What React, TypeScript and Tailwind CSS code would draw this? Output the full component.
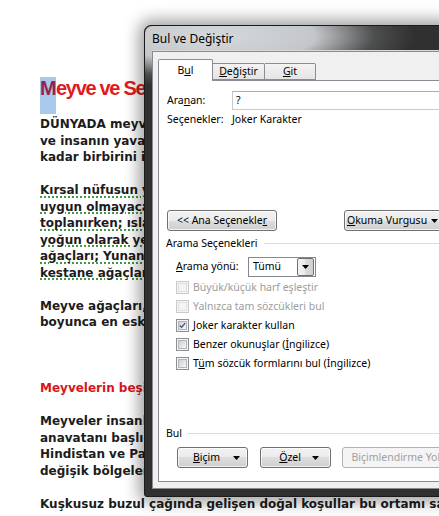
import React from "react";

const p1 = [
  "DÜNYADA meyve ağaçlarının ortaya çıkışı ile",
  "ve insanın yavaş yavaş yerleşik yaşama geçişi",
  "kadar birbirini izleyen iki olgudur.",
];

const p2 = [
  "Kırsal nüfusun yaşadığı bölgelerde tarıma",
  "uygun olmayacak kadar dik yamaçlarda meyve",
  "toplanırken; ıslah edilmiş meyve ağaçları",
  "yoğun olarak yetiştirilmiştir. Ceviz ağaçları,",
  "ağaçları; Yunanistan'da zeytin ağaçları,",
  "kestane ağaçları bunlara örnektir.",
];

const p3 = [
  "Meyve ağaçları, insanlık tarihi",
  "boyunca en eski kültür bitkileri arasındadır.",
];

const p4 = [
  "Meyveler insanlığın beşiği olan bölgelerde,",
  "anavatanı başlıca Orta Asya, Kafkasya,",
  "Hindistan ve Pakistan'dır. Meyveler daha sonra",
  "değişik bölgelere yayılmıştır.",
];

function Para({ lines, wavy = false, className = "" }: { lines: string[]; wavy?: boolean; className?: string }) {
  return (
    <div className={className}>
      {lines.map((l) => (
        <div key={l} className="h-[16.5px] whitespace-nowrap">
          <span className={wavy ? "underline decoration-dotted decoration-[#3f9b3f] decoration-[1.5px] underline-offset-[2px]" : ""}>{l}</span>
        </div>
      ))}
    </div>
  );
}

function Arrow({ color = "#000" }: { color?: string }) {
  return (
    <svg width="7" height="4" viewBox="0 0 7 4" className="shrink-0">
      <path d="M0 0h7L3.5 4z" fill={color} />
    </svg>
  );
}

function Btn({ children, className = "" }: { children: React.ReactNode; className?: string }) {
  return (
    <div
      className={`h-[21px] flex items-center rounded-[3px] border border-[#707070] bg-[linear-gradient(#f2f2f2_0%,#ebebeb_50%,#dddddd_50%,#cfcfcf_100%)] shadow-[inset_0_0_0_1px_rgba(255,255,255,0.7)] text-black ${className}`}
    >
      {children}
    </div>
  );
}

function Check({ checked = false, disabled = false }: { checked?: boolean; disabled?: boolean }) {
  return (
    <div
      className={`w-[13px] h-[13px] shrink-0 border flex items-center justify-center ${
        disabled ? "border-[#c9cacb] bg-[#f4f4f4]" : "border-[#8e8f8f] bg-[#f4f4f4]"
      }`}
    >
      <div
        className={`w-[9px] h-[9px] flex items-center justify-center ${
          disabled ? "bg-[#f4f4f4] border border-[#e0e0e0]" : "bg-[linear-gradient(135deg,#cbcfd5,#f7f7f7)] border border-[#b3b6ba]"
        }`}
      >
        {checked && (
          <svg width="9" height="9" viewBox="0 0 9 9" className="-mt-[1px]">
            <path d="M1.2 4.6 3.4 6.9 7.9 1.4" stroke="#3c4f86" strokeWidth="1.7" fill="none" />
          </svg>
        )}
      </div>
    </div>
  );
}

function CheckRow({ children, checked, disabled }: { children: React.ReactNode; checked?: boolean; disabled?: boolean }) {
  return (
    <div className={`h-[19px] flex items-center gap-[4px] pl-[17px] ${disabled ? "text-[#9d9d9d]" : "text-black"}`}>
      <Check checked={checked} disabled={disabled} />
      <span>{children}</span>
    </div>
  );
}

function Dialog() {
  return (
    <div className="absolute left-[144px] top-[25px] w-[310px] h-[472px] flex flex-col rounded-t-[7px] rounded-b-[3px] border border-[#1b1b1b] bg-[#303030] shadow-[0_0_16px_5px_rgba(0,0,0,0.38)] font-['Segoe_UI','Noto_Sans',sans-serif] text-[10.5px]">
      <div className="absolute inset-0 rounded-t-[7px] bg-[radial-gradient(ellipse_200px_52px_at_70px_10px,rgba(214,217,220,1)_0%,rgba(204,207,210,0.95)_50%,rgba(120,122,124,0.4)_80%,transparent_100%)]" />
      <div className="relative h-[25px] flex items-center pl-[7px] text-[12px] text-black">Bul ve Değiştir</div>
      <div className="relative flex-1 ml-[7px] mb-[7px] flex flex-col border border-[#8a8c8e] bg-[#f0f0f0] pt-[7px] pl-[5px] pb-[6px] shadow-[0_-1px_0_#d9d9d9]">
        {/* tabs */}
        <div className="flex items-end h-[21px]">
          <div className="relative z-10 -mb-px w-[55px] h-[22px] flex items-center justify-center border border-b-0 border-[#898c95] rounded-t-[2px] bg-white text-black">
            <span>
              B<span className="underline">u</span>l
            </span>
          </div>
          <div className="w-[52px] h-[17px] flex items-center justify-center border border-l-0 border-[#898c95] rounded-tr-[2px] bg-[linear-gradient(#f3f3f3,#e4e4e4)] text-black">
            <span>
              <span className="underline">D</span>eğiştir
            </span>
          </div>
          <div className="w-[51px] h-[17px] flex items-center justify-center border border-l-0 border-[#898c95] rounded-tr-[2px] bg-[linear-gradient(#f3f3f3,#e4e4e4)] text-black">
            <span>
              <span className="underline">G</span>it
            </span>
          </div>
        </div>

        {/* panel */}
        <div className="flex-1 flex flex-col border border-[#898c95] bg-white text-black">
          <div className="mt-[10px] h-[19px] flex items-center pl-[8px]">
            <span className="w-[65px] shrink-0">
              Ara<span className="underline">n</span>an:
            </span>
            <div className="flex-1 h-[19px] flex items-center pl-[3px] border border-[#c5c9d0] border-t-[#abadb3] bg-white">?</div>
          </div>
          <div className="mt-[2px] h-[16px] flex items-center pl-[8px]">
            <span className="w-[65px] shrink-0">Seçenekler:</span>
            <span>Joker Karakter</span>
          </div>

          <div className="mt-[82px] flex items-center pl-[8px]">
            <Btn className="w-[110px] justify-center">
              <span>
                {"<< Ana Seçenekle"}
                <span className="underline">r</span>
              </span>
            </Btn>
            <Btn className="ml-[67px] w-[100px] pl-[2px] pr-[5px] justify-between">
              <span>
                <span className="underline">O</span>kuma Vurgusu
              </span>
              <Arrow />
            </Btn>
          </div>

          <div className="mt-[5px] h-[15px] flex items-center pl-[7px]">
            <span>Arama Seçenekleri</span>
            <div className="flex-1 ml-[6px] h-px bg-[#dcdcdc]" />
          </div>

          <div className="mt-[6px] h-[20px] flex items-center pl-[17px]">
            <span className="w-[72px] shrink-0">
              <span className="underline">A</span>rama yönü:
            </span>
            <div className="w-[68px] h-[20px] flex items-center border border-[#828790] bg-white">
              <span className="flex-1 pl-[4px]">Tümü</span>
              <div className="w-[17px] h-[18px] mr-px flex items-center justify-center rounded-[2px] border border-[#707070] bg-[linear-gradient(90deg,#f2f2f2_0%,#ebebeb_50%,#dddddd_50%,#cfcfcf_100%)]">
                <Arrow />
              </div>
            </div>
          </div>

          <div className="mt-[1px] flex flex-col">
            <CheckRow disabled>Büyük/küçük harf eşleştir</CheckRow>
            <CheckRow disabled>Yalnızca tam sözcükleri bul</CheckRow>
            <CheckRow checked>
              <span className="underline">J</span>oker karakter kullan
            </CheckRow>
            <CheckRow>
              Benzer okunuşlar (<span className="underline">İ</span>ngilizce)
            </CheckRow>
            <CheckRow>
              T<span className="underline">ü</span>m sözcük formlarını bul (İngilizce)
            </CheckRow>
          </div>

          <div className="mt-[53px] h-[15px] flex items-center pl-[7px]">
            <span>Bul</span>
            <div className="flex-1 ml-[6px] h-px bg-[#dcdcdc]" />
          </div>

          <div className="mt-[6px] flex items-center pl-[18px]">
            <Btn className="w-[72px] pl-[15px] gap-[13px]">
              <span>
                <span className="underline">B</span>içim
              </span>
              <Arrow />
            </Btn>
            <Btn className="ml-[12px] w-[72px] pl-[18px] gap-[11px]">
              <span>
                <span className="underline">Ö</span>zel
              </span>
              <Arrow />
            </Btn>
            <div className="ml-[11px] w-[110px] h-[21px] flex items-center pl-[8px] rounded-[3px] border border-[#adb2b5] bg-[#f4f4f4] text-[#a0a0a0] whitespace-nowrap">
              Biçimlendirme Yok
            </div>
          </div>
        </div>
      </div>
    </div>
  );
}

export default function App() {
  return (
    <div className="relative w-[439px] h-[516px] overflow-hidden bg-white">
      <div className="pt-[77px] pl-[40px] font-['DejaVu_Sans',Verdana,sans-serif] font-bold text-[12px] leading-[16.5px] text-[#1c1c1c]">
        <div className="h-[37px] flex items-start whitespace-nowrap font-['Liberation_Sans',Arial,sans-serif] text-[20px] leading-[22px] tracking-[-1.3px] text-[#e11a22]">
          <span className="h-[37px] w-[16px] bg-[#a8c8ec] text-[#9a1f4c]">M</span>
          <span>eyve ve Seçenekler</span>
        </div>
        <div className="mt-[2px]">
          <Para lines={p1} className="mb-[16.5px]" />
          <Para lines={p2} wavy className="mb-[16.5px]" />
          <Para lines={p3} className="mb-[49.5px]" />
          <div className="h-[16.5px] whitespace-nowrap text-[#d9141c] mb-[16.5px]">Meyvelerin beşiği</div>
          <Para lines={p4} className="mb-[16.5px]" />
          <div className="h-[16.5px] whitespace-nowrap">Kuşkusuz buzul çağında gelişen doğal koşullar bu ortamı sağlamıştır.</div>
        </div>
      </div>
      <Dialog />
    </div>
  );
}
